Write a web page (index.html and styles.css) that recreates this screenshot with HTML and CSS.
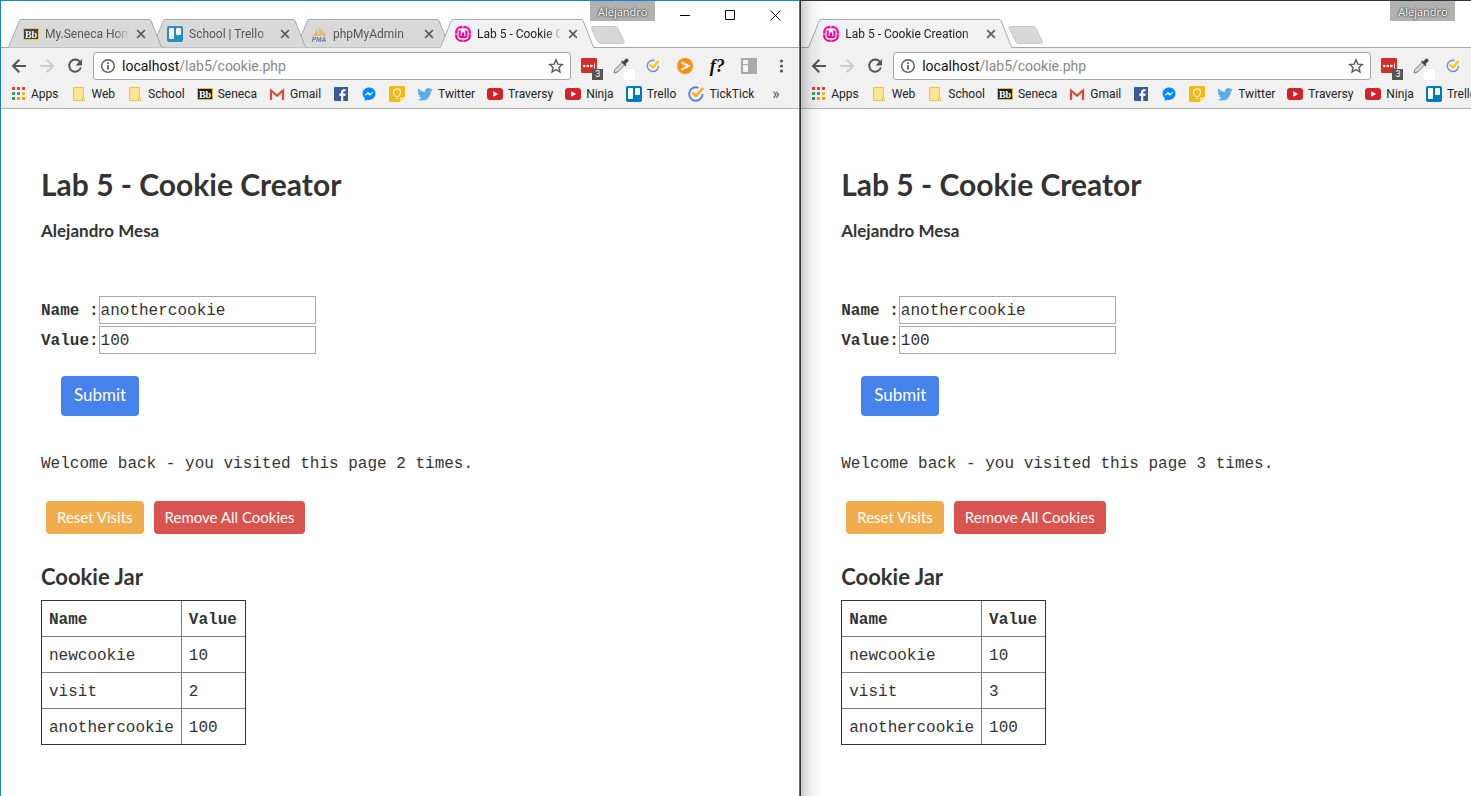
FILE: index.html
```html
<!DOCTYPE html>
<html lang="en">
<head>
<meta charset="utf-8">
<title>Lab 5 - Cookie Creation</title>
<link rel="stylesheet" href="styles.css">
</head>
<body>
<svg class="sprite" aria-hidden="true">
  <symbol id="i-tab" viewBox="0 0 156 29"><path d="M0 28.5C1 28.5 1.500 28 2 27L12.500 1.500Q13 .5 14 .5H142Q143.500 .5 144 1.500L154 27Q154.500 28.500 156 28.500" stroke="#a9a9a9"/></symbol>
  <symbol id="i-tab-wide" viewBox="0 0 206 29"><path d="M0 28.5C1 28.5 1.500 28 2 27L12.500 1.500Q13 .5 14 .5H192Q193.500 .5 194 1.500L204 27Q204.500 28.500 206 28.500" stroke="#a9a9a9"/></symbol>
  <symbol id="i-newtab" viewBox="0 0 36 18"><path d="M3 .5H25Q27 .5 28 2.500L34 15Q35 17.500 32.500 17.500H11Q8.500 17.500 7.500 15.500L1.500 2.500Q.5 .5 3 .5Z" fill="#d8d8d8" stroke="#c6c6c6"/></symbol>
  <symbol id="i-close" viewBox="0 0 10 10"><path d="M1.200 1.200l7.600 7.600M8.800 1.200l-7.600 7.600" stroke="#5c5c5c" stroke-width="1.700" fill="none"/></symbol>
  <symbol id="i-bb" viewBox="0 0 16 16"><rect x=".5" y="2.500" width="15" height="11" fill="#222" stroke="#e9b93c"/><text x="8" y="11.500" text-anchor="middle" font-family="Liberation Serif, serif" font-weight="700" font-size="10" fill="#fff">Bb</text></symbol>
  <symbol id="i-trello" viewBox="0 0 16 16"><rect width="16" height="16" rx="2" fill="#0079bf"/><rect x="2" y="2" width="5" height="11" rx="1" fill="#fff"/><rect x="9" y="2" width="5" height="7" rx="1" fill="#fff"/></symbol>
  <symbol id="i-pma" viewBox="0 0 16 16"><path d="M1 10.500Q5 8 5.500 3Q7.500 6 6.500 10Z" fill="#f3a33d"/><path d="M7 10Q9 6 8 1Q12.500 5 11 10Z" fill="#f7ad4f"/><path d="M11.500 10Q13 7 12 4Q15 7 15 10Z" fill="#f3a33d"/><text x="8" y="15.500" text-anchor="middle" font-family="Liberation Sans, sans-serif" font-style="italic" font-weight="700" font-size="6.500" fill="#55598c">PMA</text></symbol>
  <symbol id="i-wamp" viewBox="0 0 16 16"><rect x="1.200" y="1.200" width="13.600" height="13.600" rx="5" fill="none" stroke="#f70094" stroke-width="2.200"/><path d="M8 0v2.500M8 13.500V16M0 8h2M14 8h2" stroke="#fff" stroke-width=".7"/><path d="M4.700 4.500V9.500Q4.700 11.300 6.300 11.300Q8 11.300 8 9.500V6.500V9.500Q8 11.300 9.700 11.300Q11.300 11.300 11.300 9.500V4.500" fill="none" stroke="#f70094" stroke-width="2"/></symbol>
  <symbol id="i-back" viewBox="0 0 16 16"><path d="M15 8H2.500M8.300 1.700L2 8l6.300 6.300" fill="none" stroke="currentColor" stroke-width="2"/></symbol>
  <symbol id="i-forward" viewBox="0 0 16 16"><path d="M1 8h12.500M7.700 1.700L14 8l-6.300 6.300" fill="none" stroke="currentColor" stroke-width="2"/></symbol>
  <symbol id="i-reload" viewBox="0 0 16 16"><path d="M13 4A6 6 0 1 0 13.900 9.500" fill="none" stroke="currentColor" stroke-width="2"/><path d="M15 1v6.500H8.500Z" fill="currentColor"/></symbol>
  <symbol id="i-info" viewBox="0 0 16 16"><circle cx="8" cy="8" r="6.300" fill="none" stroke="#5a5a5a" stroke-width="1.400"/><path d="M8 7v4.500M8 4.300v1.700" stroke="#5a5a5a" stroke-width="1.700"/></symbol>
  <symbol id="i-star" viewBox="0 0 16 16"><path d="M8 1.800l1.800 4.300 4.600.4-3.500 3 1.100 4.500L8 11.600 4 14l1.100-4.500-3.500-3 4.600-.4Z" fill="none" stroke="#5a5a5a" stroke-width="1.400"/></symbol>
  <symbol id="i-lastpass" viewBox="0 0 16 16"><rect width="16" height="15" rx="1" fill="#d32d27"/><g fill="#fff"><circle cx="3.200" cy="8" r="1.300"/><circle cx="6.800" cy="8" r="1.300"/><circle cx="10.400" cy="8" r="1.300"/><rect x="13" y="5.500" width="1" height="5"/></g></symbol>
  <symbol id="i-dropper" viewBox="0 0 16 16"><path d="M1 15l1-3.500 7-7 2.500 2.500-7 7Z" fill="#ddd" stroke="#777"/><path d="M8 3.500l1-1 1.200 1L12.500 1Q14 0 15.200 1.200Q16 2.500 15 3.700L12.500 6l1 1.200-1 1Z" fill="#444"/></symbol>
  <symbol id="i-tick" viewBox="0 0 16 16"><path d="M10.500 1.800A6.700 6.700 0 1 0 14.600 8" fill="none" stroke="#5580e8" stroke-width="1.900"/><path d="M4.500 6.500l3.500 3.500 7-8" fill="none" stroke="#ffa90a" stroke-width="2.500"/></symbol>
  <symbol id="i-tick-small" viewBox="0 0 16 16"><path d="M9.500 2.500A5.600 5.600 0 1 0 13.500 8" fill="none" stroke="#6d8feb" stroke-width="1.500"/><path d="M5 6.500l3 3 5.500-6.500" fill="none" stroke="#ffc20a" stroke-width="2.200"/></symbol>
  <symbol id="i-play" viewBox="0 0 16 16"><circle cx="8" cy="8" r="8" fill="#ff8e11"/><path d="M4.500 4.500L11.500 8l-7 3.500" fill="none" stroke="#fff" stroke-width="2.200"/></symbol>
  <symbol id="i-panel" viewBox="0 0 16 16"><rect width="16" height="16" fill="#aaa"/><path d="M2 2h5v4H2zM2 7h5v7H2z" fill="#f4f4f4"/></symbol>
  <symbol id="i-menu" viewBox="0 0 16 16"><g fill="#5a5a5a"><circle cx="8.500" cy="3" r="1.600"/><circle cx="8.500" cy="8" r="1.600"/><circle cx="8.500" cy="13" r="1.600"/></g></symbol>
  <symbol id="i-apps" viewBox="0 0 16 16"><path d="M2 1h3v3H2zM7 1h3v3H7zM12 1h3v3h-3z" fill="#ea4335"/><path d="M2 6h3v3H2z" fill="#34a853"/><path d="M7 6h3v3H7z" fill="#4285f4"/><path d="M12 6h3v3h-3z" fill="#fbbc05"/><path d="M2 11h3v3H2z" fill="#2c9c5a"/><path d="M7 11h3v3H7zM12 11h3v3h-3z" fill="#f4a100"/></symbol>
  <symbol id="i-folder" viewBox="0 0 16 16"><path d="M2.500 1.500h10v10l1 1v2H2.500z" fill="#ffe58f" stroke="#ecc552"/><path d="M11.500 14.500v-3h1" fill="#ffe58f" stroke="#ecc552"/></symbol>
  <symbol id="i-gmail" viewBox="0 0 16 16"><path d="M1 3h14v11H1z" fill="#f4f4f4"/><path d="M3 13.500l5-5 5 5" fill="none" stroke="#ddd"/><path d="M2 14V4.500l6 5 6-5V14" fill="none" stroke="#dc4a3d" stroke-width="2.200"/></symbol>
  <symbol id="i-facebook" viewBox="0 0 16 16"><rect x="1" y="1" width="14" height="14" fill="#3b5998"/><path d="M10.300 15V9.700h2.200V7.600h-2.200V6.200Q10.300 5.200 11.300 5.200H12.700V3.200H11Q8.100 3.200 8.100 6V7.600H6.300V9.700H8.100V15Z" fill="#fff"/></symbol>
  <symbol id="i-messenger" viewBox="0 0 16 16"><path d="M8 1.500C4.200 1.500 1.500 4.200 1.500 7.600c0 2 .9 3.600 2.300 4.700V15l2.400-1.300c4.800 1 8.300-2 8.300-6.100C14.500 4.200 11.800 1.500 8 1.500Z" fill="#0088ff"/><path d="M4 9.300l3-3.100 2 1.800 3-1.800-3 3.300-2-1.800Z" fill="#fff" stroke="#fff" stroke-width=".6"/></symbol>
  <symbol id="i-keep" viewBox="0 0 16 16"><path d="M1 0h14q1 0 1 1v10l-5 5H1q-1 0-1-1V1q0-1 1-1z" fill="#f5b916"/><path d="M11 16v-5h5z" fill="#ffdf7a"/><path d="M6.200 9.500Q4.500 8 4.500 6.300A3.500 3.500 0 0 1 11.500 6.300Q11.500 8 9.800 9.500V10.500H6.200ZM6.500 12.500h3" fill="none" stroke="#fff4d1" stroke-width="1.200"/></symbol>
  <symbol id="i-twitter" viewBox="0 0 16 16"><path d="M15.700 3.500q-.8.400-1.700.5 1-.6 1.300-1.700-.9.600-1.900.8A3.200 3.200 0 0 0 8 5.900Q4 5.700 1.200 2.500 0 5 2.200 6.800q-.8 0-1.500-.4 0 2.400 2.600 3.200-.8.200-1.500 0 .7 2.200 3.100 2.300-2.100 1.600-4.700 1.300 2.200 1.300 4.700 1.300 5 .1 7.600-4.200 1.400-2.400 1.400-5.100 1.100-.7 1.800-1.700z" fill="#55acee"/></symbol>
  <symbol id="i-youtube" viewBox="0 0 16 16"><rect y="2" width="16" height="12" rx="3" fill="#d2232a"/><path d="M6.200 5.200v5.600l5-2.800z" fill="#fff"/></symbol>
</svg>

<div class="desktop">
  <section class="window window-active">
    <header class="titlebar">
      <div class="tab tab-one"><svg class="tab-shape"><use href="#i-tab"/></svg><svg class="icon dim"><use href="#i-bb"/></svg><span class="tab-title">My.Seneca Home</span><button class="tab-close" aria-label="Close tab"><svg><use href="#i-close"/></svg></button></div>
      <div class="tab tab-two"><svg class="tab-shape"><use href="#i-tab"/></svg><svg class="icon dim"><use href="#i-trello"/></svg><span class="tab-title">School | Trello</span><button class="tab-close" aria-label="Close tab"><svg><use href="#i-close"/></svg></button></div>
      <div class="tab"><svg class="tab-shape"><use href="#i-tab"/></svg><svg class="icon dim"><use href="#i-pma"/></svg><span class="tab-title">phpMyAdmin</span><button class="tab-close" aria-label="Close tab"><svg><use href="#i-close"/></svg></button></div>
      <div class="tab tab-current"><svg class="tab-shape"><use href="#i-tab"/></svg><svg class="icon"><use href="#i-wamp"/></svg><span class="tab-title">Lab 5 - Cookie Creation</span><button class="tab-close" aria-label="Close tab"><svg><use href="#i-close"/></svg></button></div>
      <button class="new-tab" aria-label="New tab"><svg><use href="#i-newtab"/></svg></button>
      <div class="window-controls">
        <button class="profile">Alejandro</button>
        <button class="control" aria-label="Minimize"><svg viewBox="0 0 11 11"><path d="M0 5.500h10"/></svg></button>
        <button class="control" aria-label="Maximize"><svg viewBox="0 0 11 11"><path d="M.5 .5h9v9h-9z"/></svg></button>
        <button class="control" aria-label="Close"><svg viewBox="0 0 11 11"><path d="M.5 .5l10 10M10.500 .5l-10 10"/></svg></button>
      </div>
    </header>
    <div class="toolbar">
      <button class="nav" aria-label="Back"><svg class="icon"><use href="#i-back"/></svg></button>
      <button class="nav nav-off" aria-label="Forward"><svg class="icon"><use href="#i-forward"/></svg></button>
      <button class="nav" aria-label="Reload"><svg class="icon"><use href="#i-reload"/></svg></button>
      <div class="omnibox"><svg class="icon"><use href="#i-info"/></svg><span class="url"><b>localhost</b>/lab5/cookie.php</span><svg class="icon"><use href="#i-star"/></svg></div>
      <div class="extensions">
        <button class="ext" aria-label="Passwords"><svg class="icon"><use href="#i-lastpass"/></svg><span class="count">3</span></button>
        <button class="ext" aria-label="Color picker"><svg class="icon"><use href="#i-dropper"/></svg><span class="swatch"></span></button>
        <button class="ext" aria-label="Tasks"><svg class="icon"><use href="#i-tick-small"/></svg></button>
        <button class="ext" aria-label="Play"><svg class="icon"><use href="#i-play"/></svg></button>
        <button class="ext ext-font">f?</button>
        <button class="ext" aria-label="Panel"><svg class="icon"><use href="#i-panel"/></svg></button>
        <button class="ext" aria-label="Menu"><svg class="icon"><use href="#i-menu"/></svg></button>
      </div>
    </div>
    <nav class="bookmarks">
      <a href="#"><svg class="icon"><use href="#i-apps"/></svg>Apps</a>
      <a href="#"><svg class="icon"><use href="#i-folder"/></svg>Web</a>
      <a href="#"><svg class="icon"><use href="#i-folder"/></svg>School</a>
      <a href="#"><svg class="icon"><use href="#i-bb"/></svg>Seneca</a>
      <a href="#"><svg class="icon"><use href="#i-gmail"/></svg>Gmail</a>
      <a href="#" aria-label="Facebook"><svg class="icon"><use href="#i-facebook"/></svg></a>
      <a href="#" aria-label="Messenger"><svg class="icon"><use href="#i-messenger"/></svg></a>
      <a href="#" aria-label="Keep"><svg class="icon"><use href="#i-keep"/></svg></a>
      <a href="#"><svg class="icon"><use href="#i-twitter"/></svg>Twitter</a>
      <a href="#"><svg class="icon"><use href="#i-youtube"/></svg>Traversy</a>
      <a href="#"><svg class="icon"><use href="#i-youtube"/></svg>Ninja</a>
      <a href="#"><svg class="icon"><use href="#i-trello"/></svg>Trello</a>
      <a href="#"><svg class="icon"><use href="#i-tick"/></svg>TickTick</a>
      <button class="more" aria-label="More bookmarks">»</button>
    </nav>
    <main class="page">
      <h1>Lab 5 - Cookie Creator</h1>
      <h4>Alejandro Mesa</h4>
      <form class="cookie-form">
        <div class="field"><label for="name-a">Name :</label><input id="name-a" type="text" value="anothercookie"></div>
        <div class="field"><label for="value-a">Value:</label><input id="value-a" type="text" value="100"></div>
        <button class="btn btn-submit" type="button">Submit</button>
      </form>
      <p class="welcome">Welcome back - you visited this page 2 times.</p>
      <div class="actions"><button class="btn btn-reset">Reset Visits</button><button class="btn btn-remove">Remove All Cookies</button></div>
      <h3>Cookie Jar</h3>
      <table class="jar">
        <tr><th>Name</th><th>Value</th></tr>
        <tr><td>newcookie</td><td>10</td></tr>
        <tr><td>visit</td><td>2</td></tr>
        <tr><td>anothercookie</td><td>100</td></tr>
      </table>
    </main>
  </section>

  <section class="window window-behind">
    <header class="titlebar">
      <div class="tab tab-current tab-wide"><svg class="tab-shape"><use href="#i-tab-wide"/></svg><svg class="icon"><use href="#i-wamp"/></svg><span class="tab-title">Lab 5 - Cookie Creation</span><button class="tab-close" aria-label="Close tab"><svg><use href="#i-close"/></svg></button></div>
      <button class="new-tab" aria-label="New tab"><svg><use href="#i-newtab"/></svg></button>
      <div class="window-controls">
        <button class="profile">Alejandro</button>
        <button class="control" aria-label="Minimize"></button>
        <button class="control" aria-label="Maximize"></button>
        <button class="control" aria-label="Close"></button>
      </div>
    </header>
    <div class="toolbar">
      <button class="nav" aria-label="Back"><svg class="icon"><use href="#i-back"/></svg></button>
      <button class="nav nav-off" aria-label="Forward"><svg class="icon"><use href="#i-forward"/></svg></button>
      <button class="nav" aria-label="Reload"><svg class="icon"><use href="#i-reload"/></svg></button>
      <div class="omnibox"><svg class="icon"><use href="#i-info"/></svg><span class="url"><b>localhost</b>/lab5/cookie.php</span><svg class="icon"><use href="#i-star"/></svg></div>
      <div class="extensions">
        <button class="ext" aria-label="Passwords"><svg class="icon"><use href="#i-lastpass"/></svg><span class="count">3</span></button>
        <button class="ext" aria-label="Color picker"><svg class="icon"><use href="#i-dropper"/></svg><span class="swatch"></span></button>
        <button class="ext" aria-label="Tasks"><svg class="icon"><use href="#i-tick-small"/></svg></button>
        <button class="ext" aria-label="Play"></button>
        <button class="ext" aria-label="Fonts"></button>
        <button class="ext" aria-label="Panel"></button>
        <button class="ext" aria-label="Menu"></button>
      </div>
    </div>
    <nav class="bookmarks">
      <a href="#"><svg class="icon"><use href="#i-apps"/></svg>Apps</a>
      <a href="#"><svg class="icon"><use href="#i-folder"/></svg>Web</a>
      <a href="#"><svg class="icon"><use href="#i-folder"/></svg>School</a>
      <a href="#"><svg class="icon"><use href="#i-bb"/></svg>Seneca</a>
      <a href="#"><svg class="icon"><use href="#i-gmail"/></svg>Gmail</a>
      <a href="#" aria-label="Facebook"><svg class="icon"><use href="#i-facebook"/></svg></a>
      <a href="#" aria-label="Messenger"><svg class="icon"><use href="#i-messenger"/></svg></a>
      <a href="#" aria-label="Keep"><svg class="icon"><use href="#i-keep"/></svg></a>
      <a href="#"><svg class="icon"><use href="#i-twitter"/></svg>Twitter</a>
      <a href="#"><svg class="icon"><use href="#i-youtube"/></svg>Traversy</a>
      <a href="#"><svg class="icon"><use href="#i-youtube"/></svg>Ninja</a>
      <a href="#"><svg class="icon"><use href="#i-trello"/></svg>Trello</a>
    </nav>
    <main class="page">
      <h1>Lab 5 - Cookie Creator</h1>
      <h4>Alejandro Mesa</h4>
      <form class="cookie-form">
        <div class="field"><label for="name-b">Name :</label><input id="name-b" type="text" value="anothercookie"></div>
        <div class="field"><label for="value-b">Value:</label><input id="value-b" type="text" value="100"></div>
        <button class="btn btn-submit" type="button">Submit</button>
      </form>
      <p class="welcome">Welcome back - you visited this page 3 times.</p>
      <div class="actions"><button class="btn btn-reset">Reset Visits</button><button class="btn btn-remove">Remove All Cookies</button></div>
      <h3>Cookie Jar</h3>
      <table class="jar">
        <tr><th>Name</th><th>Value</th></tr>
        <tr><td>newcookie</td><td>10</td></tr>
        <tr><td>visit</td><td>3</td></tr>
        <tr><td>anothercookie</td><td>100</td></tr>
      </table>
    </main>
  </section>
</div>
</body>
</html>
```
FILE: styles.css
```css
* { box-sizing: border-box; }
body { margin: 0; background: #fff; color: #333; font-family: Roboto, "Open Sans", sans-serif; font-size: 12px; overflow: hidden; }
button { font: inherit; color: inherit; background: none; border: 0; padding: 0; }
svg { display: block; flex: none; }
.sprite { display: none; }
.icon { width: 16px; height: 16px; }
.dim { opacity: .8; }

.desktop { display: flex; min-height: 100vh; overflow: hidden; }
.window { position: relative; flex: 0 0 54.4%; background: #fff; border-top: 1px solid; border-left: 1px solid; }
.window-active { border-color: #1c7fd6; border-right: 1px solid #1c7fd6; }
.window-behind { border-color: #333; border-right: 1px solid #333; }
.window-behind::before { content: ""; position: absolute; z-index: 20; top: 0; bottom: 0; left: 0; width: 22px; background: linear-gradient(to right, rgba(0, 0, 0, .2), rgba(0, 0, 0, .06) 45%, transparent); pointer-events: none; }

/* Tab strip */
.titlebar { position: relative; display: flex; align-items: flex-end; height: 47px; padding-left: 6px; isolation: isolate; border-bottom: 1px solid #a9a9a9; }
.tab { position: relative; z-index: 1; display: flex; align-items: center; gap: 6px; width: 156px; height: 29px; margin: 0 -12px -1px 0; padding: 0 17px 0 16px; color: #555; fill: #d9d9d9; }
.tab-one { z-index: 3; }
.tab-two { z-index: 2; }
.tab-current { z-index: 4; color: #222; fill: #f1f1f1; }
.tab-wide { width: 206px; }
.tab-shape { position: absolute; inset: 0; z-index: -1; width: 100%; height: 100%; }
.tab-title { flex: 1; min-width: 0; overflow: hidden; white-space: nowrap; mask-image: linear-gradient(to left, transparent, #000 16px); }
.tab-close svg { width: 10px; height: 10px; }
.new-tab { margin: 0 0 3px 7px; }
.new-tab svg { width: 36px; height: 18px; }
.tab-current::after { content: ""; position: absolute; left: 2px; right: 2px; bottom: 0; height: 1px; background: #f1f1f1; }
.window-controls { position: absolute; top: 0; right: 1px; display: flex; }
.profile { width: 65px; height: 20px; margin-right: 8px; background: #b1b1b1; color: #fff; font-family: "Open Sans", sans-serif; font-size: 11px; text-shadow: 0 0 2px #333, 0 0 2px #333; }
.control { display: grid; place-items: center; width: 45px; height: 28px; }
.control svg { width: 11px; height: 11px; fill: none; stroke: #000; }

/* Toolbar */
.toolbar { display: flex; align-items: center; height: 35px; padding: 0 10px; background: #f1f1f1; }
.nav { margin-right: 12px; color: #555; }
.nav-off { color: #ccc; }
.omnibox { flex: 1; display: flex; align-items: center; gap: 6px; height: 28px; margin-left: -2px; padding: 0 6px; background: #fff; border: 1px solid #a5a5a5; border-radius: 3px; }
.url { flex: 1; color: #888; font-size: 14px; }
.url b { font-weight: 400; color: #111; }
.extensions { display: flex; gap: 16px; margin-left: 10px; }
.ext { position: relative; width: 16px; height: 16px; }
.ext-font { font-family: "Liberation Serif", serif; font-size: 18px; font-style: italic; font-weight: 700; line-height: 16px; color: #111; }
.count { position: absolute; left: 11px; top: 11px; width: 11px; height: 11px; background: #555; color: #fff; font-size: 9px; line-height: 11px; }
.swatch { position: absolute; left: 11px; top: 11px; width: 11px; height: 11px; background: #fff; }

/* Bookmarks */
.bookmarks { display: flex; align-items: center; gap: 12px; height: 26px; padding: 0 9px 4px; background: #f1f1f1; border-bottom: 1px solid #b4b4b4; color: #222; white-space: nowrap; }
.bookmarks a { display: flex; align-items: center; gap: 5px; color: inherit; text-decoration: none; }
.more { padding: 0 6px; font-size: 16px; line-height: 16px; color: #555; }

/* Page */
.page { padding: 55px 40px 51px; font-family: "Liberation Mono", monospace; font-size: 16px; line-height: 24px; }
h1, h3, h4, .btn { font-family: Lato, sans-serif; }
h1 { margin: 0; font-size: 30px; line-height: 40px; }
h4 { margin: 15px 0 0; font-size: 17px; line-height: 24px; }
h3 { margin: 31px 0 11px; font-size: 22px; line-height: 24px; }
.cookie-form { display: flex; flex-direction: column; align-items: flex-start; gap: 2px; margin-top: 53px; }
.field { display: flex; align-items: center; white-space: pre; }
.field label { padding-top: 2px; font-weight: 700; }
.field input { width: 217px; height: 28px; padding: 3px 1px 1px; border: 1px solid #a9a9a9; background: #fff; color: #333; font: inherit; }
.btn { padding-bottom: 2px; border-radius: 4px; color: #fff; }
.btn-submit { height: 40px; margin: 20px 0 0 20px; padding: 0 13px 2px; background: #4582ec; font-size: 17px; }
.welcome { margin: 36px 0 0; }
.actions { display: flex; gap: 10px; margin: 25px 0 0 5px; }
.actions .btn { height: 33px; padding: 0 11px 2px; font-size: 15px; }
.btn-reset { background: #f0ad4e; }
.btn-remove { background: #d9534f; }
.jar { border-collapse: collapse; border: 1px solid #333; outline: 1px solid #333; outline-offset: -1px; }
.jar th, .jar td { height: 36px; padding: 2px 7px 0; border: 1px solid #808080; text-align: left; }
.jar th:last-child { padding-right: 8px; }
```
